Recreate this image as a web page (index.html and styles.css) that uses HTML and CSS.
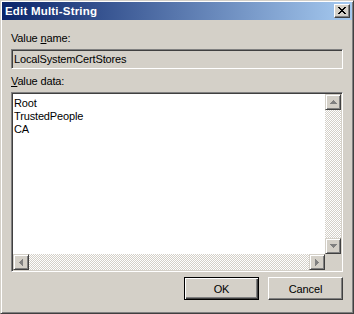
FILE: index.html
```html
<!DOCTYPE html>
<html>
<head>
<meta charset="utf-8">
<link rel="stylesheet" href="styles.css">
</head>
<body>
<div class="window">
  <div class="titlebar">
    <span class="title">Edit Multi-String</span>
    <button class="close" aria-label="Close">
      <svg width="8" height="7" viewBox="0 0 8 7"><path d="M0 0h2v1h1v1h2V1h1V0h2v1H7v1H6v1H5v1h1v1h1v1h1v1H6V6H5V5H3v1H2v1H0V6h1V5h1V4h1V3H2V2H1V1H0z" fill="#000"/></svg>
    </button>
  </div>
  <div class="content">
    <div class="label">Value <u>n</u>ame:</div>
    <div class="field">LocalSystemCertStores</div>
    <div class="label label-data"><u>V</u>alue data:</div>
    <div class="textarea">
      <div class="text">Root<br>TrustedPeople<br>CA</div>
      <div class="vscroll">
        <div class="sbtn"><svg width="7" height="4" viewBox="0 0 7 4"><path d="M3 0h1v1h1v1h1v1h1v1H0V3h1V2h1V1h1z" fill="#808080"/></svg></div>
        <div class="track"></div>
        <div class="sbtn"><svg width="7" height="4" viewBox="0 0 7 4"><path d="M0 0h7v1H6v1H5v1H4v1H3V3H2V2H1V1H0z" fill="#808080"/></svg></div>
      </div>
      <div class="hscroll">
        <div class="sbtn"><svg width="4" height="7" viewBox="0 0 4 7"><path d="M3 0h1v7H3V6H2V5H1V4H0V3h1V2h1V1h1z" fill="#808080"/></svg></div>
        <div class="track"></div>
        <div class="sbtn"><svg width="4" height="7" viewBox="0 0 4 7"><path d="M0 0h1v1h1v1h1v1h1v1H3v1H2v1H1v1H0z" fill="#808080"/></svg></div>
      </div>
      <div class="corner"></div>
    </div>
    <div class="buttons">
      <button class="btn default">OK</button>
      <button class="btn">Cancel</button>
    </div>
  </div>
</div>
</body>
</html>
```

FILE: styles.css
```css
html, body {
  margin: 0;
  padding: 0;
  background: #d4d0c8;
}
body {
  font-family: "Liberation Sans", Arial, sans-serif;
  font-size: 11px;
  color: #000;
  letter-spacing: -0.15px;
}
.window {
  box-sizing: border-box;
  width: 354px;
  height: 314px;
  background: #d4d0c8;
  border: 1px solid;
  border-color: #d4d0c8 #404040 #404040 #d4d0c8;
  box-shadow: inset 1px 1px #fff, inset -1px -1px #808080;
  padding: 1px;
  display: flex;
  flex-direction: column;
}
.titlebar {
  height: 18px;
  flex: none;
  background: linear-gradient(to right, #0a246a, #a6caf0);
  display: flex;
  align-items: center;
  justify-content: space-between;
  padding: 0 2px 0 3px;
}
.title {
  color: #fff;
  font-weight: bold;
  font-size: 11.5px;
  line-height: 13px;
  letter-spacing: 0.2px;
}
.close {
  width: 16px;
  height: 14px;
  padding: 0;
  margin: 0;
  border: 1px solid;
  border-color: #fff #404040 #404040 #fff;
  box-shadow: inset -1px -1px #808080;
  background: #d4d0c8;
  display: flex;
  align-items: flex-start;
  justify-content: flex-start;
  box-sizing: border-box;
}
.close svg {
  display: block;
  margin: 2px 0 0 3px;
}
.content {
  flex: 1;
  padding: 12px 9px 10px;
  display: flex;
  flex-direction: column;
}
.label {
  line-height: 13px;
  height: 13px;
}
.label u {
  text-decoration: underline;
  text-underline-offset: 1px;
}
.field {
  margin-top: 4px;
  box-sizing: border-box;
  height: 20px;
  border: 1px solid;
  border-color: #808080 #fff #fff #808080;
  box-shadow: inset 1px 1px #404040, inset -1px -1px #d4d0c8;
  padding: 1px 2px;
  line-height: 16px;
  background: #d4d0c8;
}
.label-data {
  margin-top: 6px;
}
.textarea {
  margin-top: 4px;
  box-sizing: border-box;
  height: 180px;
  border: 1px solid;
  border-color: #808080 #fff #fff #808080;
  box-shadow: inset 1px 1px #404040, inset -1px -1px #d4d0c8;
  padding: 1px;
  background: #fff;
  display: grid;
  grid-template-columns: 1fr 16px;
  grid-template-rows: 1fr 16px;
}
.text {
  padding: 3px 0 0 1px;
  line-height: 13px;
  overflow: hidden;
}
.vscroll {
  display: flex;
  flex-direction: column;
}
.hscroll {
  display: flex;
}
.track {
  flex: 1;
  background: repeating-conic-gradient(#fff 0 25%, #d4d0c8 0 50%) 0 0 / 2px 2px;
}
.sbtn {
  box-sizing: border-box;
  width: 16px;
  height: 16px;
  flex: none;
  background: #d4d0c8;
  border: 1px solid;
  border-color: #d4d0c8 #404040 #404040 #d4d0c8;
  box-shadow: inset 1px 1px #fff, inset -1px -1px #808080;
  display: flex;
  align-items: center;
  justify-content: center;
}
.sbtn svg {
  display: block;
}
.corner {
  background: #d4d0c8;
}
.buttons {
  margin-top: 5px;
  display: flex;
  justify-content: flex-end;
  gap: 9px;
}
.btn {
  box-sizing: border-box;
  width: 75px;
  height: 23px;
  padding: 0;
  margin: 0;
  font-family: "Liberation Sans", Arial, sans-serif;
  font-size: 11px;
  letter-spacing: -0.15px;
  color: #000;
  background: #d4d0c8;
  border: 1px solid;
  border-color: #fff #404040 #404040 #fff;
  box-shadow: inset -1px -1px #808080;
}
.btn.default {
  border: 1px solid #000;
  box-shadow: inset 1px 1px #fff, inset -1px -1px #404040, inset -2px -2px #808080;
}
```
